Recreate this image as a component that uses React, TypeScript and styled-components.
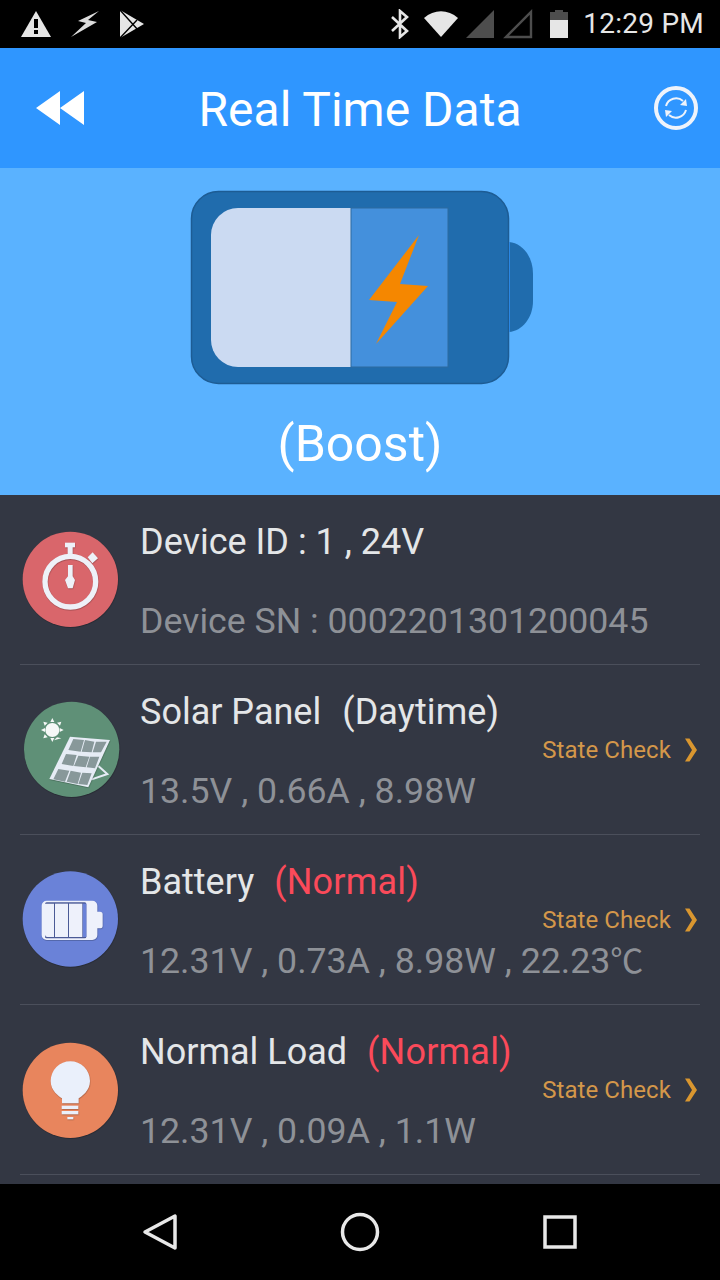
import React from 'react'
import styled, { createGlobalStyle } from 'styled-components'

const GlobalStyle = createGlobalStyle`
  html, body { margin: 0; padding: 0; background: #000; }
  body { font-family: Roboto, "Liberation Sans", sans-serif; }
`

const Screen = styled.div`
  width: 720px;
  height: 1280px;
  display: flex;
  flex-direction: column;
  overflow: hidden;
`

const StatusBar = styled.div`
  height: 48px;
  background: #000;
  display: flex;
  align-items: center;
  justify-content: space-between;
  padding: 0 16px 0 20px;
  flex: none;
`

const StatusGroup = styled.div`
  display: flex;
  align-items: center;
`

const StatusIcon = styled.svg<{ $ml?: number }>`
  display: block;
  flex: none;
  margin-left: ${(p) => p.$ml ?? 0}px;
`

const Time = styled.span`
  color: #e6e6e6;
  font-size: 28px;
  letter-spacing: 0.25px;
  line-height: 48px;
  margin-left: 14px;
  white-space: nowrap;
`

const Header = styled.div`
  height: 120px;
  flex: none;
  background: #2f96ff;
  display: grid;
  grid-template-columns: 1fr auto 1fr;
  align-items: center;
  padding: 0 22px 0 36px;
`

const RefreshSlot = styled.div`
  display: flex;
  justify-content: flex-end;
`

const Title = styled.h1`
  margin: 0;
  padding: 3px 14px 0 0;
  color: #fff;
  font-size: 48px;
  font-weight: 400;
  line-height: 117px;
`

const Hero = styled.div`
  height: 327px;
  flex: none;
  background: #5ab2ff;
  display: flex;
  flex-direction: column;
  align-items: center;
  padding-top: 22px;
  box-sizing: border-box;
`

const HeroBattery = styled.svg`
  display: block;
  margin-left: 4px;
`

const Mode = styled.div`
  color: #fff;
  font-size: 50px;
  line-height: 58px;
  margin-top: 29px;
`

const List = styled.div`
  flex: 1;
  background: #333743;
  display: flex;
  flex-direction: column;
  overflow: hidden;
`

const Row = styled.div`
  height: 170px;
  flex: none;
  box-sizing: border-box;
  margin: 0 20px;
  border-bottom: 1px solid #4b4f5b;
  display: flex;
  align-items: center;
`

const Badge = styled.svg.attrs({ width: 100, height: 100, viewBox: '33 27 300 300' })`
  display: block;
  flex: none;
  margin: -2px 19px 0 1px;
`

const Texts = styled.div`
  flex: 1;
  min-width: 0;
  display: flex;
  flex-direction: column;
  gap: 39px;
  padding-top: 4px;
`

const Line = styled.div<{ $dim?: boolean }>`
  height: 40px;
  font-size: ${(p) => (p.$dim ? 35.7 : 36)}px;
  line-height: 40px;
  white-space: nowrap;
  color: ${(p) => (p.$dim ? '#8e9197' : '#e4e6e8')};
`

const Degree = styled.span`
  font-family: "Noto Sans CJK SC", Roboto, sans-serif;
  font-size: 33px;
  line-height: 0;
  letter-spacing: -1.5px;
`

const Status = styled.span`
  color: #fb4a5a;
  margin-left: 20px;
  letter-spacing: 0.2px;
`

const Daytime = styled.span`
  margin-left: 21px;
  letter-spacing: 0.1px;
`

const Check = styled.div`
  flex: none;
  display: flex;
  align-items: center;
  gap: 13px;
  color: #d4974a;
  font-size: 24px;
  letter-spacing: 0.08px;
  white-space: nowrap;
  margin-right: 2px;
`

const NavBar = styled.div`
  height: 96px;
  flex: none;
  background: #000;
  display: flex;
  align-items: center;
  justify-content: center;
  gap: 162px;
`

const shadow = { filter: 'drop-shadow(1px 2px 1px rgba(0,0,0,.3))' }

const Disc = ({ cx, cy, fill }: { cx: number; cy: number; fill: string }) => (
  <circle cx={cx} cy={cy} r="143" fill={fill} style={shadow} />
)

// badge icons are drawn in 3x coordinates, hence the 300 unit viewBox
const WatchIcon = () => (
  <Badge>
    <Disc cx={181} cy={178} fill="#d9666b" />
    <g fill="#eef1f8" style={shadow}>
      <rect x="165" y="68" width="30" height="14" />
      <rect x="173" y="80" width="15" height="28" />
      <path d="M248 97l16 18-17 15-14-18z" />
      <path d="M174 135h14v34l7 11-7 25h-14l-9-25 9-11z" />
    </g>
    <circle cx="181" cy="185" r="76" fill="none" stroke="#eef1f8" strokeWidth="16" style={shadow} />
  </Badge>
)

const SolarIcon = () => (
  <Badge>
    <Disc cx={185} cy={178} fill="#5f9077" />
    <g fill="#f6f8f7">
      <circle cx="127" cy="120" r="21" />
      <path d="M127 84l-6 12h12zM127 156l-6-12h12zM93 120l12-6v12zM161 120l-12-6v12zM100 95l13 3-9 9zM154 95l-13 3 9 9zM100 145l13-3-9-9zM154 145l-13-3-9 9z" />
    </g>
    <path d="M265 228l27 24-47 16" fill="none" stroke="#e6ecf5" strokeWidth="6" />
    <path d="M180 140l120 10-65 142-117-25z" fill="#e6ecf5" style={shadow} />
    <g fill="#88989a">
      <path d="M190 147l32 3-10 35-37-5zM225 150l28 5-8 32-30-2zM258 155l32 0-17 32-25 0z" />
      <path d="M168 192l32 3-10 33-35-6zM205 197l33 3-11 32-35-4zM240 200l28 0-13 35-25-3z" />
      <path d="M145 237l33 5-13 33-35-7zM182 242l31 6-10 34-33-7zM217 248l28 2-13 35-27-3z" />
    </g>
  </Badge>
)

const BatteryIcon = () => (
  <Badge>
    <Disc cx={181} cy={177} fill="#6a82d8" />
    <path
      d="M110 122h137a15 15 0 0 1 15 15v18h8a8 8 0 0 1 8 8v34a8 8 0 0 1-8 8h-8v20a15 15 0 0 1-15 15H110a15 15 0 0 1-15-15V137a15 15 0 0 1 15-15z"
      fill="#eef1fb"
      style={shadow}
    />
    <rect x="105" y="127" width="124" height="108" rx="5" fill="#4b5a96" />
    <g fill="#eef1fb">
      <path d="M105 131h27v100h-20a7 7 0 0 1-7-7z" />
      <rect x="135" y="131" width="39" height="100" />
      <rect x="177" y="131" width="40" height="100" />
    </g>
    <rect x="219" y="131" width="10" height="100" fill="#6a82d8" />
  </Badge>
)

const BulbIcon = () => (
  <Badge>
    <Disc cx={181} cy={181} fill="#e8855d" />
    <g fill="#eaf0fb" style={shadow}>
      <path d="M181 94a59 59 0 0 1 59 59c0 30-25 46-34 52v15h-50v-15c-9-6-34-22-34-52a59 59 0 0 1 59-59z" />
      <rect x="155" y="227" width="50" height="10" />
      <rect x="155" y="243" width="50" height="10" />
      <rect x="172" y="261" width="18" height="7" />
    </g>
  </Badge>
)

const Chevron = () => (
  <svg width="14" height="24" viewBox="0 0 14 24">
    <path d="M1 0.5h4.5L13 12 5.5 23.5H1L8 12z" fill="#d9962f" />
  </svg>
)

const StateCheck = () => (
  <Check>
    State Check
    <Chevron />
  </Check>
)

export default function App() {
  return (
    <Screen>
      <GlobalStyle />
      <StatusBar>
        <StatusGroup>
          <StatusIcon width="32" height="28" viewBox="0 0 32 28">
            <path d="M16 1l15 26H1z" fill="#e6e6e6" />
            <rect x="14" y="9" width="4" height="9" fill="#000" />
            <rect x="14" y="20" width="4" height="4" fill="#000" />
          </StatusIcon>
          <StatusIcon $ml={18} width="30" height="28" viewBox="0 0 30 28" style={{ filter: 'blur(.7px)' }}>
            <path d="M29 1L8 11l8 2L1 27l26-15-9-2z" fill="#dcdcdc" />
          </StatusIcon>
          <StatusIcon $ml={19} width="26" height="28" viewBox="0 0 26 28">
            <path d="M1 0l24 14L1 28z" fill="#e6e6e6" />
            <path d="M1 0l18 20M1 28l17-18" stroke="#000" strokeWidth="1.4" fill="none" />
          </StatusIcon>
        </StatusGroup>
        <StatusGroup>
          <StatusIcon width="20" height="30" viewBox="0 0 20 30">
            <path d="M2 8l15 14-7 6V2l7 6L2 22" fill="none" stroke="#e6e6e6" strokeWidth="2.6" />
          </StatusIcon>
          <StatusIcon $ml={13} width="36" height="28" viewBox="0 0 36 28">
            <path d="M18 27L1 8c10-9 24-9 34 0z" fill="#e6e6e6" />
          </StatusIcon>
          <StatusIcon $ml={6} width="30" height="30" viewBox="0 0 30 30">
            <path d="M29 1v28H1z" fill="#4d4d4d" />
          </StatusIcon>
          <StatusIcon $ml={8} width="30" height="30" viewBox="0 0 30 30">
            <path d="M28 3v25H3z" fill="none" stroke="#4d4d4d" strokeWidth="2.4" />
          </StatusIcon>
          <StatusIcon $ml={16} width="20" height="30" viewBox="0 0 20 30">
            <rect x="6" y="1" width="8" height="3" fill="#4d4d4d" />
            <rect x="1" y="3" width="18" height="8" fill="#4d4d4d" />
            <rect x="1" y="11" width="18" height="18" fill="#e6e6e6" />
          </StatusIcon>
          <Time>12:29 PM</Time>
        </StatusGroup>
      </StatusBar>

      <Header>
        <svg width="48" height="34" viewBox="0 0 48 34">
          <path d="M0 17L24 0v34zM24 17L48 0v34z" fill="#fff" />
        </svg>
        <Title>Real Time Data</Title>
        <RefreshSlot>
          <svg width="44" height="44" viewBox="0 0 44 44">
            <circle cx="22" cy="22" r="20" fill="none" stroke="#eef3fb" strokeWidth="4" />
            <path d="M12 20a10.5 10.5 0 0 1 17-5" fill="none" stroke="#eef3fb" strokeWidth="2" />
            <path d="M32 24a10.5 10.5 0 0 1-17 5" fill="none" stroke="#eef3fb" strokeWidth="2" />
            <path d="M26 19l6-6 1 7zM18 25l-6 6-1-7z" fill="#eef3fb" />
          </svg>
        </RefreshSlot>
      </Header>

      <Hero>
        <HeroBattery width="344" height="196" viewBox="0 0 344 196">
          <path d="M319 52c13 1 24 14 24 32v27c0 17-11 30-24 31z" fill="#206cad" />
          <rect x="318.5" y="52" width="1.5" height="90" fill="#2f96ff" />
          <rect x="1.5" y="1.5" width="317" height="192" rx="27" fill="#206cad" stroke="#1d5c94" strokeWidth="1.5" />
          <path d="M48 18h113v159H48a27 27 0 0 1-27-27V45a27 27 0 0 1 27-27z" fill="#cbdaf2" />
          <rect x="161" y="18" width="97" height="159" fill="#4490dc" stroke="#2d6a9f" strokeWidth="1" />
          <path d="M229 45l-19 49 28 2-52 58 21-42-28-2z" fill="#f58700" />
        </HeroBattery>
        <Mode>(Boost)</Mode>
      </Hero>

      <List>
        <Row>
          <WatchIcon />
          <Texts>
            <Line>Device ID : 1 , 24V</Line>
            <Line $dim>Device SN : 0002201301200045</Line>
          </Texts>
        </Row>
        <Row>
          <SolarIcon />
          <Texts>
            <Line>Solar Panel<Daytime>(Daytime)</Daytime></Line>
            <Line $dim>13.5V , 0.66A , 8.98W</Line>
          </Texts>
          <StateCheck />
        </Row>
        <Row>
          <BatteryIcon />
          <Texts>
            <Line>Battery<Status>(Normal)</Status></Line>
            <Line $dim>12.31V , 0.73A , 8.98W , 22.23<Degree>℃</Degree></Line>
          </Texts>
          <StateCheck />
        </Row>
        <Row>
          <BulbIcon />
          <Texts>
            <Line>Normal Load<Status>(Normal)</Status></Line>
            <Line $dim>12.31V , 0.09A , 1.1W</Line>
          </Texts>
          <StateCheck />
        </Row>
      </List>

      <NavBar>
        <svg width="36" height="38" viewBox="0 0 36 38">
          <path d="M33 3v32L3 19z" fill="none" stroke="#e8e8e8" strokeWidth="3.5" strokeLinejoin="round" />
        </svg>
        <svg width="40" height="40" viewBox="0 0 40 40">
          <circle cx="20" cy="20" r="17.5" fill="none" stroke="#e8e8e8" strokeWidth="3.5" />
        </svg>
        <svg width="36" height="36" viewBox="0 0 36 36">
          <rect x="3" y="3" width="30" height="30" fill="none" stroke="#e8e8e8" strokeWidth="3.5" />
        </svg>
      </NavBar>
    </Screen>
  )
}
